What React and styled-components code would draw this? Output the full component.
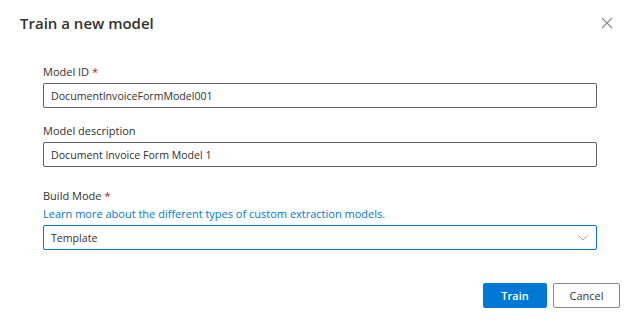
import styled, { createGlobalStyle } from "styled-components";

const GlobalStyle = createGlobalStyle`
  body {
    margin: 0;
    background: #ffffff;
    font-family: "Open Sans", "Noto Sans", sans-serif;
    color: #323130;
  }
`;

const Dialog = styled.div`
  width: 639px;
  height: 330px;
  box-sizing: border-box;
  padding: 12px 19px 0 20px;
  display: flex;
  flex-direction: column;
`;

const Header = styled.div`
  display: flex;
  align-items: center;
  justify-content: space-between;
  height: 22px;
`;

const Title = styled.h1`
  margin: 0;
  font-size: 15px;
  font-weight: 600;
  color: #323130;
`;

const CloseButton = styled.button`
  border: none;
  background: none;
  padding: 0;
  width: 12px;
  height: 12px;
  margin-right: 7px;
  display: flex;
  cursor: pointer;
`;

const Form = styled.div`
  display: flex;
  flex-direction: column;
  padding: 30px 23px 0 23px;
`;

const Field = styled.div`
  display: flex;
  flex-direction: column;
  margin-bottom: ${(p) => p.$gap || 0}px;
`;

const Label = styled.label`
  font-size: 11px;
  font-weight: 400;
  line-height: 16px;
  margin-bottom: 3px;
  color: #323130;
`;

const Required = styled.span`
  color: #a4262c;
  margin-left: 3px;
`;

const LearnLink = styled.a`
  font-size: 11px;
  font-weight: 400;
  line-height: 16px;
  color: #0078d4;
  text-decoration: none;
  margin: -1px 0 3px;
`;

const TextInput = styled.div`
  height: 25px;
  box-sizing: border-box;
  border: 1px solid ${(p) => (p.$focused ? "#0078d4" : "#605e5c")};
  border-radius: 2px;
  padding: 0 8px 0 7px;
  display: flex;
  align-items: center;
  justify-content: space-between;
  font-size: 10.6px;
  color: #323130;
`;

const Footer = styled.div`
  display: flex;
  justify-content: flex-end;
  gap: 6px;
  padding: 33px 0 0;
`;

const Button = styled.button`
  height: 25px;
  box-sizing: border-box;
  border-radius: 2px;
  font-family: inherit;
  font-size: 11px;
  font-weight: ${(p) => (p.$primary ? 600 : 400)};
  padding: 0;
  width: ${(p) => p.$w}px;
  border: 1px solid ${(p) => (p.$primary ? "#0078d4" : "#8a8886")};
  background: ${(p) => (p.$primary ? "#0078d4" : "#ffffff")};
  color: ${(p) => (p.$primary ? "#ffffff" : "#323130")};
`;

const Chevron = () => (
  <svg width="10" height="6" viewBox="0 0 10 6">
    <path d="M0.5 0.5 L5 5 L9.5 0.5" fill="none" stroke="#a19f9d" strokeWidth="1" />
  </svg>
);

const CloseIcon = () => (
  <svg width="12" height="12" viewBox="0 0 12 12">
    <path d="M1 1 L11 11 M11 1 L1 11" stroke="#8a8886" strokeWidth="1.1" />
  </svg>
);

export default function App() {
  return (
    <>
      <GlobalStyle />
      <Dialog>
        <Header>
          <Title>Train a new model</Title>
          <CloseButton aria-label="Close">
            <CloseIcon />
          </CloseButton>
        </Header>
        <Form>
          <Field $gap={15}>
            <Label>
              Model ID<Required>*</Required>
            </Label>
            <TextInput>DocumentInvoiceFormModel001</TextInput>
          </Field>
          <Field $gap={21}>
            <Label>Model description</Label>
            <TextInput>Document Invoice Form Model 1</TextInput>
          </Field>
          <Field>
            <Label>
              Build Mode<Required>*</Required>
            </Label>
            <LearnLink href="#">
              Learn more about the different types of custom extraction models.
            </LearnLink>
            <TextInput $focused>
              Template
              <Chevron />
            </TextInput>
          </Field>
        </Form>
        <Footer>
          <Button $primary $w={64}>Train</Button>
          <Button $w={67}>Cancel</Button>
        </Footer>
      </Dialog>
    </>
  );
}
